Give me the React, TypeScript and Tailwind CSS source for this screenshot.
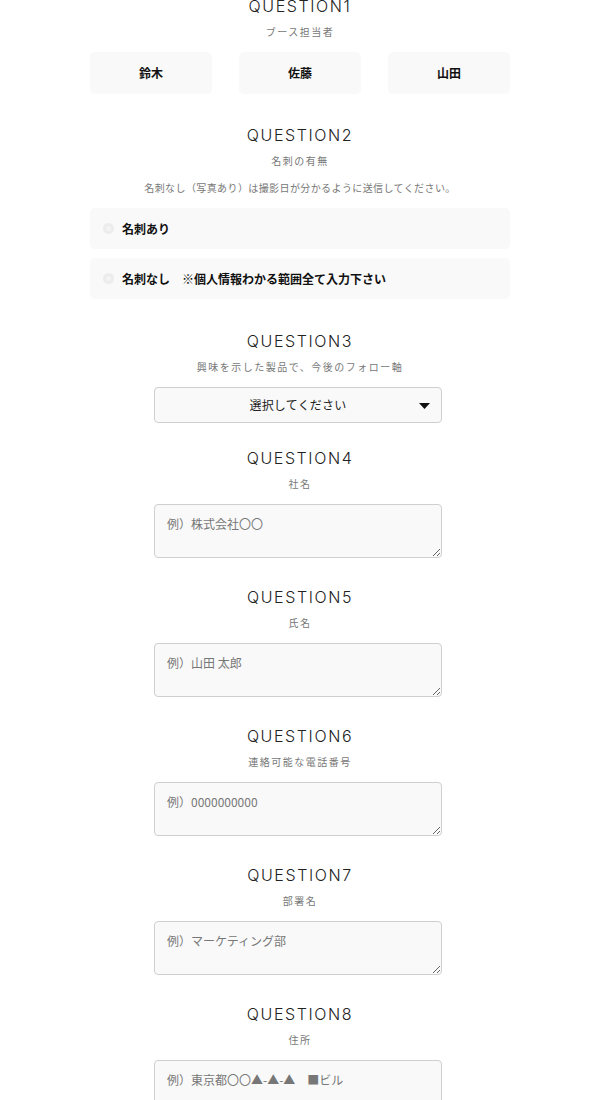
import React from "react";

const jp = { fontFamily: '"Noto Sans CJK JP", "Noto Sans", sans-serif' };
const title = { fontFamily: 'Inter, "Noto Sans", sans-serif' };

const textQuestions = [
  { no: 4, label: "社名", placeholder: "例）株式会社〇〇" },
  { no: 5, label: "氏名", placeholder: "例）山田 太郎" },
  { no: 6, label: "連絡可能な電話番号", placeholder: "例）0000000000" },
  { no: 7, label: "部署名", placeholder: "例）マーケティング部" },
  { no: 8, label: "住所", placeholder: "例）東京都〇〇▲-▲-▲　■ビル" },
];

function Heading({ no, label }: { no: number; label: string }) {
  return (
    <>
      <h2
        style={title}
        className="h-5 text-center text-[16px] leading-5 font-light tracking-[0.1em] text-[#222]"
      >
        QUESTION{no}
      </h2>
      <p style={jp} className="mt-2 h-4 text-center text-[10px] leading-4 tracking-[0.15em] text-[#777]">
        {label}
      </p>
    </>
  );
}

function Radio({ label }: { label: string }) {
  return (
    <label className="flex h-[41px] items-center gap-2 rounded-[5px] bg-[#f9f9f9] px-[13px]">
      <span className="flex h-[11px] w-[11px] items-center justify-center rounded-full bg-[#ececec]">
        <span className="h-[5px] w-[5px] rounded-full bg-[#f4f4f4]" />
      </span>
      <span style={jp} className="text-[12px] font-bold text-[#111]">
        {label}
      </span>
    </label>
  );
}

export default function App() {
  return (
    <div className="min-h-[1100px] bg-white">
      <div className="mx-auto w-[420px] -mt-1 pb-10">
        {/* Q1 */}
        <Heading no={1} label="ブース担当者" />
        <div className="mt-3 grid grid-cols-3 gap-[27px]">
          {["鈴木", "佐藤", "山田"].map((n) => (
            <button
              key={n}
              style={jp}
              className="h-[42px] rounded-[5px] bg-[#f9f9f9] text-[12px] font-bold text-[#111]"
            >
              {n}
            </button>
          ))}
        </div>

        {/* Q2 */}
        <div className="mt-[31px]">
          <Heading no={2} label="名刺の有無" />
          <p style={jp} className="mt-[11px] h-4 text-center text-[10px] leading-4 tracking-[0.04em] text-[#777]">
            名刺なし（写真あり）は撮影日が分かるように送信してください。
          </p>
          <div className="mt-3 flex flex-col gap-[9px]">
            <Radio label="名刺あり" />
            <Radio label="名刺なし　※個人情報わかる範囲全て入力下さい" />
          </div>
        </div>

        {/* Q3 */}
        <div className="mt-8">
          <Heading no={3} label="興味を示した製品で、今後のフォロー軸" />
          <div className="relative mt-3 ml-[64px] flex h-[36px] w-[288px] items-center justify-center rounded-[4px] border border-[#cfcfcf] bg-[#f9f9f9]">
            <span style={jp} className="text-[12px] tracking-[0.02em] text-[#222]">
              選択してください
            </span>
            <svg className="absolute right-[11px] top-[15px]" width="11" height="6" viewBox="0 0 11 6">
              <path d="M0 0h11L5.5 6z" fill="#111" />
            </svg>
          </div>
        </div>

        {/* Q4-Q8 */}
        {textQuestions.map((q, i) => (
          <div key={q.no} className={i === 0 ? "mt-[25px]" : "mt-[29px]"}>
            <Heading no={q.no} label={q.label} />
            <textarea
              style={jp}
              placeholder={q.placeholder}
              className="mt-3 ml-[64px] block h-[54px] w-[288px] rounded-[4px] border border-[#cfcfcf] bg-[#f9f9f9] px-3 py-[9px] text-[12px] leading-5 text-[#222] placeholder:text-[#777]"
            />
          </div>
        ))}
      </div>
    </div>
  );
}
